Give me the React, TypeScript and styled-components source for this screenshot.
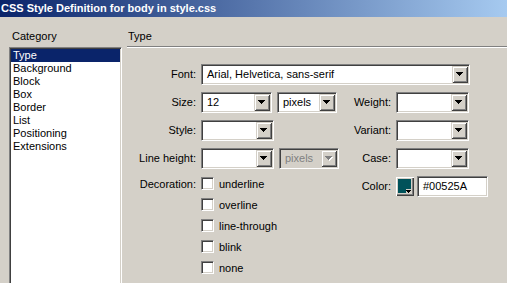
import React from "react";
import styled, { createGlobalStyle } from "styled-components";

const Global = createGlobalStyle`
  html, body { margin: 0; padding: 0; background: #d4d0c8; }
  * { box-sizing: border-box; }
`;

const Window = styled.div`
  width: 507px;
  height: 283px;
  overflow: hidden;
  background: #d4d0c8;
  font-family: "Liberation Sans", Arial, sans-serif;
  font-size: 11px;
  color: #000;
  display: flex;
  flex-direction: column;
`;

const TitleBar = styled.div`
  height: 17px;
  flex-shrink: 0;
  padding-left: 1px;
  line-height: 17px;
  font-weight: bold;
  color: #fff;
  white-space: nowrap;
  background: linear-gradient(to right, #0a246a, #a6caf0);
`;

const Body = styled.div`
  flex: 1;
  display: flex;
  padding-top: 13px;
`;

const CategoryPane = styled.div`
  width: 127px;
  flex-shrink: 0;
  padding-left: 9px;
  display: flex;
  flex-direction: column;
`;

const PaneHeading = styled.div`
  height: 17px;
  line-height: 13px;
  padding-left: 3px;
`;

const ListBox = styled.div`
  width: 113px;
  height: 260px;
  background: #fff;
  border: 1px solid;
  border-color: #808080 #fff #fff #808080;
  box-shadow: inset 1px 1px #404040, inset -1px -1px #d4d0c8;
  padding: 1px;
`;

const ListItem = styled.div<{ $selected?: boolean }>`
  height: 13px;
  line-height: 13px;
  padding-left: 2px;
  background: ${(p) => (p.$selected ? "#0a246a" : "transparent")};
  color: ${(p) => (p.$selected ? "#fff" : "#000")};
`;

const MainPane = styled.div`
  flex: 1;
  display: flex;
  flex-direction: column;
`;

const MainHeading = styled.div`
  height: 16px;
  line-height: 13px;
  padding-left: 1px;
`;

const Separator = styled.div`
  height: 2px;
  border-top: 1px solid #808080;
  border-bottom: 1px solid #fff;
`;

const Form = styled.div`
  display: grid;
  grid-template-columns: 74px 136px 59px 74px;
  grid-auto-rows: 21px;
  row-gap: 7px;
  padding-top: 16px;
`;

const Label = styled.div<{ $top?: boolean }>`
  text-align: right;
  padding-right: 5px;
  line-height: 13px;
  white-space: nowrap;
  align-self: ${(p) => (p.$top ? "start" : "center")};
  margin-top: ${(p) => (p.$top ? "2px" : "0")};
`;

const Group = styled.div<{ $span?: number }>`
  display: flex;
  align-items: center;
  gap: 5px;
  grid-column: span ${(p) => p.$span ?? 1};
`;

const Combo = styled.div<{ $w?: number; $disabled?: boolean }>`
  width: ${(p) => (p.$w ? `${p.$w}px` : "100%")};
  height: 21px;
  flex-shrink: 0;
  display: flex;
  align-items: stretch;
  border: 1px solid;
  border-color: #808080 #fff #fff #808080;
  box-shadow: inset 1px 1px #404040, inset -1px -1px #d4d0c8;
  padding: 1px;
  background: ${(p) => (p.$disabled ? "#d4d0c8" : "#fff")};
  color: ${(p) => (p.$disabled ? "#808080" : "#000")};
`;

const ComboValue = styled.div`
  flex: 1;
  min-width: 0;
  padding-left: 4px;
  line-height: 17px;
  white-space: nowrap;
  overflow: hidden;
`;

const DropButton = styled.div`
  width: 16px;
  height: 17px;
  flex-shrink: 0;
  display: flex;
  align-items: center;
  justify-content: center;
  background: #d4d0c8;
  box-shadow: inset 1px 1px #d4d0c8, inset -1px -1px #404040,
    inset 2px 2px #fff, inset -2px -2px #808080;
`;

const ArrowSvg = styled.svg`
  display: block;
  shape-rendering: crispEdges;
`;

const ARROW = "M0 0h7v1H0zM1 1h5v1H1zM2 2h3v1H2zM3 3h1v1H3z";

function Arrow({ disabled }: { disabled?: boolean }) {
  return (
    <ArrowSvg width={8} height={5} viewBox="0 0 8 5">
      {disabled && <path d={ARROW} fill="#fff" transform="translate(1 1)" />}
      <path d={ARROW} fill={disabled ? "#808080" : "#000"} />
    </ArrowSvg>
  );
}

function Select({ value, w, disabled }: { value?: string; w?: number; disabled?: boolean }) {
  return (
    <Combo $w={w} $disabled={disabled}>
      <ComboValue>{value ?? ""}</ComboValue>
      <DropButton>
        <Arrow disabled={disabled} />
      </DropButton>
    </Combo>
  );
}

const CheckList = styled.div`
  grid-row: span 5;
  display: flex;
  flex-direction: column;
`;

const CheckRow = styled.div`
  height: 21px;
  display: flex;
  align-items: flex-start;
  gap: 5px;
`;

const CheckBox = styled.span`
  width: 13px;
  height: 13px;
  margin-top: 1px;
  flex-shrink: 0;
  background: #fff;
  border: 1px solid;
  border-color: #808080 #fff #fff #808080;
  box-shadow: inset 1px 1px #404040, inset -1px -1px #d4d0c8;
`;

const CheckText = styled.span`
  line-height: 13px;
  margin-top: 2px;
`;

const ColorGroup = styled.div`
  display: flex;
  align-items: center;
  gap: 3px;
  align-self: start;
  height: 21px;
`;

const Swatch = styled.div`
  width: 18px;
  height: 19px;
  flex-shrink: 0;
  padding: 2px;
  background: #d4d0c8;
  box-shadow: inset 1px 1px #fff, inset -1px -1px #404040,
    inset -2px -2px #808080;
`;

const SwatchSvg = styled.svg`
  display: block;
  shape-rendering: crispEdges;
`;

const TextField = styled.div`
  width: 71px;
  height: 21px;
  flex-shrink: 0;
  border: 1px solid;
  border-color: #808080 #fff #fff #808080;
  box-shadow: inset 1px 1px #404040, inset -1px -1px #d4d0c8;
  background: #fff;
  padding-left: 5px;
  line-height: 19px;
  white-space: nowrap;
`;

const categories = [
  "Type",
  "Background",
  "Block",
  "Box",
  "Border",
  "List",
  "Positioning",
  "Extensions",
];

const decorations = ["underline", "overline", "line-through", "blink", "none"];

export default function App() {
  return (
    <>
      <Global />
      <Window>
        <TitleBar>CSS Style Definition for body in style.css</TitleBar>
        <Body>
          <CategoryPane>
            <PaneHeading>Category</PaneHeading>
            <ListBox>
              {categories.map((c, i) => (
                <ListItem key={c} $selected={i === 0}>
                  {c}
                </ListItem>
              ))}
            </ListBox>
          </CategoryPane>
          <MainPane>
            <MainHeading>Type</MainHeading>
            <Separator />
            <Form>
              <Label>Font:</Label>
              <Group $span={3}>
                <Select value="Arial, Helvetica, sans-serif" w={269} />
              </Group>

              <Label>Size:</Label>
              <Group>
                <Select value="12" w={71} />
                <Select value="pixels" w={60} />
              </Group>
              <Label>Weight:</Label>
              <Select w={73} />

              <Label>Style:</Label>
              <Group>
                <Select w={73} />
              </Group>
              <Label>Variant:</Label>
              <Select w={73} />

              <Label>Line height:</Label>
              <Group>
                <Select w={73} />
                <Select value="pixels" w={60} disabled />
              </Group>
              <Label>Case:</Label>
              <Select w={73} />

              <Label $top>Decoration:</Label>
              <CheckList>
                {decorations.map((d) => (
                  <CheckRow key={d}>
                    <CheckBox />
                    <CheckText>{d}</CheckText>
                  </CheckRow>
                ))}
              </CheckList>
              <Label>Color:</Label>
              <ColorGroup>
                <Swatch>
                  <SwatchSvg width={14} height={15} viewBox="0 0 14 15">
                    <rect x={0} y={0} width={13} height={14} fill="#00525A" />
                    <rect x={8} y={10} width={6} height={5} fill="#d4d0c8" />
                    <path d="M8 11h5v1H8zM9 12h3v1H9zM10 13h1v1h-1z" fill="#000" />
                  </SwatchSvg>
                </Swatch>
                <TextField>#00525A</TextField>
              </ColorGroup>
            </Form>
          </MainPane>
        </Body>
      </Window>
    </>
  );
}
